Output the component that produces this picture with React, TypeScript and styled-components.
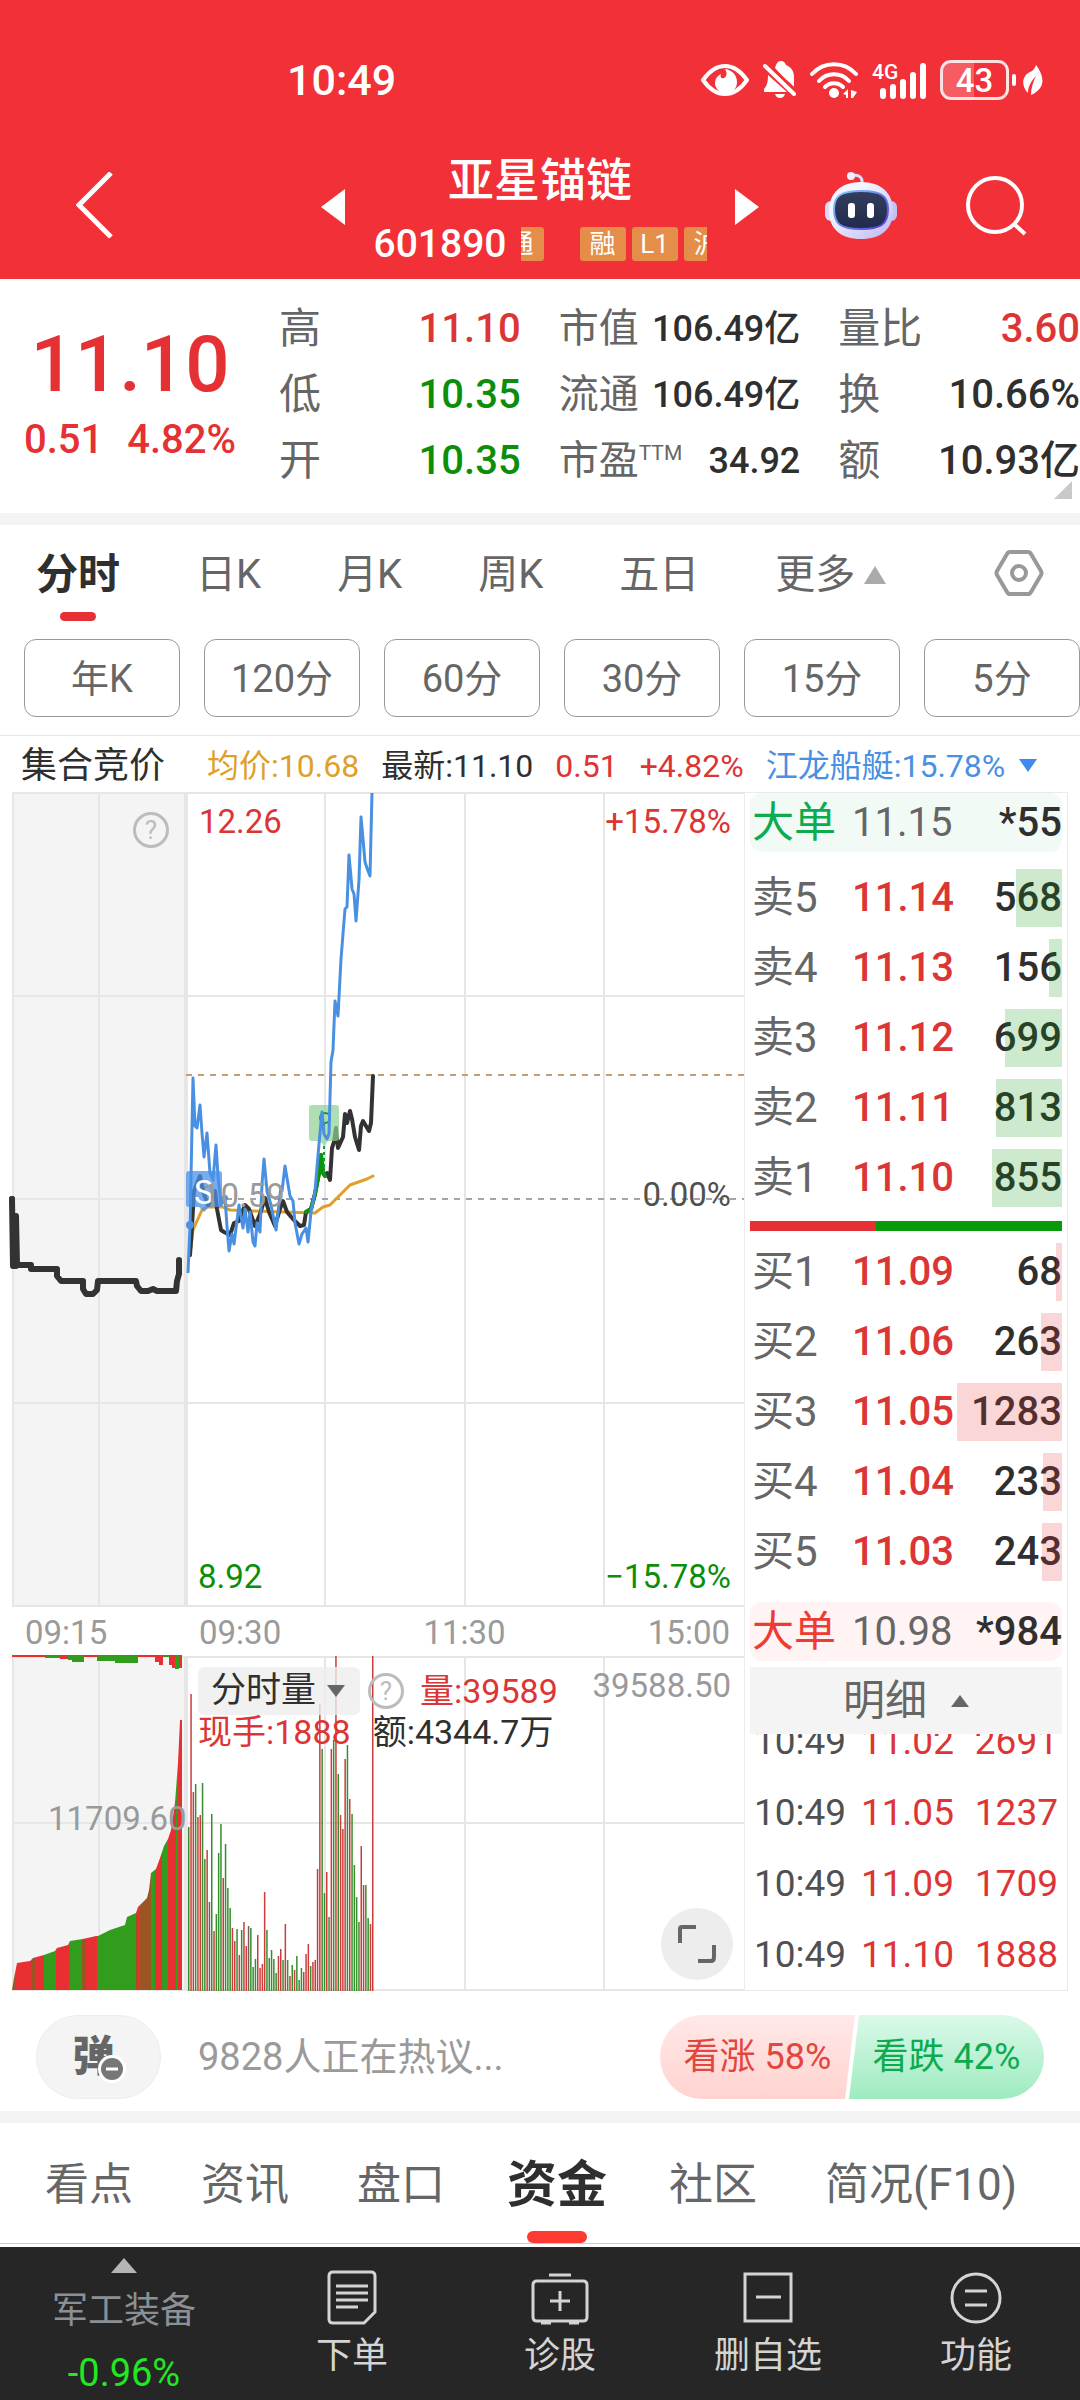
import React from "react";
import styled, { createGlobalStyle } from "styled-components";

const FONT = `Roboto, "Noto Sans CJK SC", sans-serif`;
const RED = "#dc3535";
const GREEN = "#0b8f0b";
const INK = "#2f2f2f";
const MUTED = "#666666";
const FAINT = "#9a9a9a";
const BLUE = "#4a90e2";

const GlobalStyle = createGlobalStyle`
  *, *::before, *::after { box-sizing: border-box; }
  body {
    margin: 0;
    background: #ffffff;
    color: ${INK};
    font-family: ${FONT};
    overflow-x: hidden;
  }
  button, select {
    margin: 0;
    padding: 0;
    border: 0;
    background: none;
    color: inherit;
    font: inherit;
    cursor: pointer;
  }
  h1, p, dl, dt, dd { margin: 0; font-weight: inherit; }
  a { color: inherit; text-decoration: none; }
  svg { display: block; flex: none; }
`;

/* ---------- Header ---------- */

const Header = styled.header`
  background: #f23037;
  color: #ffffff;
  height: 279px;
`;

const StatusBar = styled.div`
  display: flex;
  align-items: center;
  justify-content: space-between;
  height: 124px;
  padding: 36px 37px 0 287px;
`;

const Clock = styled.time`
  font-size: 43px;
  line-height: 50px;
  font-weight: 500;
`;

const StatusIcons = styled.div`
  display: flex;
  align-items: center;
  gap: 14px;
`;

const TitleBar = styled.div`
  display: grid;
  grid-template-columns: 1fr 438px 1fr;
  height: 155px;
`;

const HeaderSide = styled.div<{ $end?: boolean }>`
  display: flex;
  align-items: center;
  justify-content: ${(p) => (p.$end ? "flex-end" : "flex-start")};
  gap: 68px;
  padding: ${(p) => (p.$end ? "8px 53px 0 0" : "6px 0 0 76px")};
`;

const TitleCenter = styled.div`
  display: flex;
  align-items: center;
  justify-content: space-between;
  padding-top: 10px;
`;

const TitleStack = styled.div`
  display: flex;
  flex-direction: column;
  align-items: center;
  gap: 9px;
  padding-top: 10px;
`;

const StockName = styled.h1`
  font-size: 46px;
  line-height: 56px;
  font-weight: 500;
`;

const CodeLine = styled.div`
  display: flex;
  align-items: center;
  gap: 14px;
  font-size: 39px;
  line-height: 54px;
  font-weight: 500;
`;

const TagStrip = styled.div`
  display: flex;
  justify-content: center;
  gap: 6px;
  width: 186px;
  overflow: hidden;
`;

const Tag = styled.span<{ $spaced?: boolean }>`
  flex: none;
  width: 46px;
  margin-right: ${(p) => (p.$spaced ? "30px" : "0")};
  border-radius: 3px;
  background: #e48e49;
  font-size: 26px;
  line-height: 34px;
  font-weight: 400;
  text-align: center;
`;

/* ---------- Quote ---------- */

const Quote = styled.section`
  position: relative;
  display: grid;
  grid-template-columns: 260px 1fr;
  gap: 19px;
  height: 246px;
  border-bottom: 12px solid #f4f4f4;
`;

const PriceBlock = styled.div`
  display: flex;
  flex-direction: column;
  align-items: center;
  padding-top: 44px;
  color: #e53133;
  font-weight: 500;
`;

const BigPrice = styled.p`
  font-size: 78px;
  line-height: 84px;
`;

const Change = styled.p`
  display: flex;
  gap: 24px;
  margin-top: 10px;
  font-size: 40px;
  line-height: 46px;
`;

const Stats = styled.div`
  display: grid;
  grid-template-columns: repeat(3, 1fr);
  gap: 38px;
  padding-top: 17px;
`;

const StatColumn = styled.dl<{ $compact?: boolean }>`
  font-size: ${(p) => (p.$compact ? "36px" : "40px")};
  line-height: 66px;

  dt { font-size: ${(p) => (p.$compact ? "40px" : "42px")}; }
`;

const Stat = styled.div`
  display: flex;
  justify-content: space-between;
  height: 66px;
  white-space: nowrap;

  dt { color: ${MUTED}; }
`;

const Sup = styled.sup`
  font-size: 21px;
  line-height: 20px;
  vertical-align: 14px;
`;

const StatValue = styled.dd<{ $color?: string }>`
  color: ${(p) => p.$color || INK};
  font-weight: 500;
`;

const Corner = styled.span`
  position: absolute;
  right: 8px;
  bottom: 14px;
  border-left: 18px solid transparent;
  border-bottom: 18px solid #c9c9c9;
`;

/* ---------- Period tabs ---------- */

const PeriodTabs = styled.nav`
  display: flex;
  align-items: center;
  gap: 76px;
  height: 96px;
  padding: 0 36px;
`;

const PeriodTab = styled.button<{ $active?: boolean }>`
  position: relative;
  display: flex;
  align-items: center;
  gap: 9px;
  height: 96px;
  padding-top: 3px;
  font-size: ${(p) => (p.$active ? "42px" : "40px")};
  line-height: 48px;
  color: ${(p) => (p.$active ? INK : MUTED)};
  font-weight: ${(p) => (p.$active ? 700 : 400)};
  white-space: nowrap;

  &::after {
    content: "";
    position: absolute;
    left: 50%;
    bottom: 0;
    width: 36px;
    height: 9px;
    margin-left: -18px;
    border-radius: 5px;
    background: ${(p) => (p.$active ? "#e53133" : "transparent")};
  }
`;

const SettingsButton = styled.button`
  margin-left: auto;
`;

const MinuteRow = styled.div`
  display: flex;
  gap: 24px;
  height: 115px;
  padding: 18px 0 18px 24px;
  border-bottom: 1px solid #e6e6e6;
  overflow: hidden;
`;

const MinuteButton = styled.button`
  flex: 1 0 156px;
  height: 78px;
  padding-top: 2px;
  border: 1px solid #999999;
  border-radius: 12px;
  color: ${MUTED};
  font-size: 38px;
  line-height: 46px;
`;

const InfoRow = styled.div`
  display: flex;
  align-items: center;
  gap: 22px;
  height: 56px;
  padding: 3px 0 0 21px;
  font-size: 32px;
  line-height: 40px;
  white-space: nowrap;
`;

const Auction = styled.button`
  margin-right: 20px;
  font-size: 36px;
`;

const InfoText = styled.span<{ $color?: string }>`
  color: ${(p) => p.$color || INK};
`;

const PeerButton = styled.button`
  display: flex;
  align-items: center;
  gap: 14px;
  color: ${BLUE};
`;

/* ---------- Charts ---------- */

const ChartArea = styled.section`
  display: grid;
  grid-template-columns: minmax(0, 732fr) minmax(0, 324fr);
  padding: 0 12px;
`;

const ChartColumn = styled.div`
  display: flex;
  flex-direction: column;
`;

const Plot = styled.div<{ $h: number }>`
  position: relative;
  height: ${(p) => p.$h}px;

  > svg { width: 100%; height: 100%; overflow: visible; }
`;

const PlotLabel = styled.span<{
  $top: number;
  $left?: number;
  $right?: number;
  $color?: string;
}>`
  position: absolute;
  top: ${(p) => p.$top}px;
  left: ${(p) => (p.$left === undefined ? "auto" : `${p.$left}px`)};
  right: ${(p) => (p.$right === undefined ? "auto" : `${p.$right}px`)};
  color: ${(p) => p.$color || FAINT};
  font-size: 33px;
  line-height: 38px;
  white-space: nowrap;
`;

const HelpButton = styled.button<{ $floating?: boolean }>`
  position: ${(p) => (p.$floating ? "absolute" : "static")};
  top: 20px;
  left: 121px;
  width: 36px;
  height: 36px;
  border: 3px solid #bcbcbc;
  border-radius: 50%;
  color: #bcbcbc;
  font-size: 26px;
  line-height: 30px;
`;

const TimeAxis = styled.div`
  display: grid;
  grid-template-columns: 174px 1fr 1fr 1fr;
  height: 49px;
  padding: 0 14px 0 13px;
  color: ${FAINT};
  font-size: 33px;
  line-height: 51px;

  span:nth-child(3) { text-align: center; }
  span:last-child { text-align: right; }
`;

const VolumeHead = styled.div`
  position: absolute;
  top: 11px;
  left: 186px;
  font-size: 34px;
  line-height: 34px;
  white-space: nowrap;
`;

const VolumeLine = styled.div<{ $gap: number }>`
  display: flex;
  align-items: center;
  gap: ${(p) => p.$gap}px;
`;

const SelectBox = styled.label`
  display: flex;
  align-items: center;
  gap: 10px;
  width: 162px;
  height: 48px;
  padding-left: 13px;
  border-radius: 6px;
  background: rgba(238, 238, 238, 0.8);

  select {
    appearance: none;
    width: 106px;
    color: ${INK};
    font-size: 35px;
    line-height: 42px;
  }
`;

const VolumeValue = styled.span`
  margin-left: 8px;
  color: ${RED};
`;

const ExpandButton = styled.button`
  position: absolute;
  right: 11px;
  bottom: 11px;
  display: grid;
  place-items: center;
  width: 72px;
  height: 72px;
  border-radius: 50%;
  background: #ededed;
`;

/* ---------- Order book ---------- */

const Book = styled.div`
  display: flex;
  flex-direction: column;
  padding: 0 5px;
  border: 1px solid #ebebeb;
`;

const BigOrder = styled.div<{ $side: "buy" | "sell" }>`
  display: grid;
  grid-template-columns: 100px 1fr auto;
  align-items: center;
  height: 59px;
  padding-left: 2px;
  border-radius: 12px;
  background: ${(p) => (p.$side === "buy" ? "#fff3f3" : "#f2faf6")};
  color: ${MUTED};
  font-size: 40px;
  line-height: 50px;

  strong {
    color: ${(p) => (p.$side === "buy" ? "#ee3b34" : "#0cab4f")};
    font-size: 42px;
    font-weight: 400;
  }
  em { color: ${INK}; font-style: normal; font-weight: 500; }
`;

const BookTable = styled.table<{ $side: "buy" | "sell" }>`
  display: block;
  margin: ${(p) => (p.$side === "sell" ? "11px 0 8px" : "6px 0 15px")};

  tbody { display: block; }
`;

const BookRow = styled.tr`
  position: relative;
  display: grid;
  grid-template-columns: 100px 1fr auto;
  align-items: center;
  height: 70px;
  padding-left: 2px;
  font-size: 40px;
  line-height: 58px;
  font-weight: 500;

  th, td { padding: 0; }
  th { color: ${MUTED}; font-size: 42px; font-weight: 400; text-align: left; }
`;

const BookPrice = styled.td`
  color: ${RED};
`;

const BookVolume = styled.td`
  color: ${INK};
`;

const DepthBar = styled.span<{ $side: "buy" | "sell" }>`
  position: absolute;
  top: 6px;
  right: 0;
  height: 58px;
  background: ${(p) =>
    p.$side === "buy" ? "rgba(229, 49, 51, 0.2)" : "rgba(9, 150, 9, 0.2)"};
`;

const Ratio = styled.div`
  display: grid;
  grid-template-columns: 126fr 186fr;
  height: 10px;

  i:first-child { background: #e53133; }
  i:last-child { background: #089a08; }
`;

const DetailToggle = styled.button`
  display: flex;
  align-items: center;
  justify-content: center;
  gap: 24px;
  height: 67px;
  margin-top: 6px;
  background: #f4f4f4;
  color: ${MUTED};
  font-size: 42px;
  line-height: 50px;
`;

const Ticks = styled.table`
  display: flex;
  flex-direction: column;
  justify-content: flex-end;
  height: 256px;
  overflow: hidden;

  tbody { display: block; }
  tr {
    display: grid;
    grid-template-columns: 107px 1fr auto;
    padding: 0 4px 0 4px;
    color: ${RED};
    font-size: 37px;
    line-height: 71px;
  }
  td { padding: 0; }
  td:first-child { color: #505050; }
`;

/* ---------- Discussion ---------- */

const Discussion = styled.section`
  display: flex;
  align-items: center;
  gap: 37px;
  height: 132px;
  padding: 12px 36px 0;
  border-bottom: 12px solid #f4f4f4;
`;

const Danmu = styled.button`
  position: relative;
  width: 125px;
  height: 84px;
  padding-right: 10px;
  border: 1px solid #ededed;
  border-radius: 42px;
  background: #f4f4f4;
  color: ${MUTED};
  font-size: 42px;
  line-height: 80px;
  font-weight: 900;

  svg { position: absolute; left: 61px; top: 39px; }
`;

const TalkLink = styled.a`
  flex: 1;
  color: ${FAINT};
  font-size: 38px;
  line-height: 48px;
`;

const Votes = styled.div`
  display: flex;
  height: 84px;
  border-radius: 42px;
  overflow: hidden;
`;

const Vote = styled.button<{ $down?: boolean }>`
  width: 195px;
  margin-left: ${(p) => (p.$down ? "-6px" : "0")};
  background: ${(p) =>
    p.$down
      ? "linear-gradient(#dbf9e9, #9eebbf)"
      : "linear-gradient(#ffe9e8, #ffd3cf)"};
  clip-path: ${(p) =>
    p.$down
      ? "polygon(10px 0, 100% 0, 100% 100%, 0 100%)"
      : "polygon(0 0, 100% 0, calc(100% - 10px) 100%, 0 100%)"};
  color: ${(p) => (p.$down ? "#0cab4f" : "#e2463f")};
  font-size: 36px;
  line-height: 44px;
`;

/* ---------- Bottom ---------- */

const SectionTabs = styled.nav`
  display: flex;
  align-items: center;
  gap: 68px;
  height: 121px;
  margin-bottom: 3px;
  padding-left: 45px;
  border-bottom: 1px solid #cccccc;
`;

const SectionTab = styled.button<{ $active?: boolean }>`
  position: relative;
  height: 120px;
  margin: ${(p) => (p.$active ? "0 -6px" : "0")};
  padding-top: 3px;
  color: ${(p) => (p.$active ? INK : MUTED)};
  font-size: ${(p) => (p.$active ? "50px" : "44px")};
  line-height: 60px;
  font-weight: ${(p) => (p.$active ? 700 : 400)};
  white-space: nowrap;

  &::after {
    content: "";
    position: absolute;
    left: 50%;
    bottom: 0;
    width: 60px;
    height: 12px;
    margin-left: -30px;
    border-radius: 6px;
    background: ${(p) => (p.$active ? "#fd3a30" : "transparent")};
  }
`;

const BottomBar = styled.nav`
  display: grid;
  grid-template-columns: 248fr repeat(4, 208fr);
  height: 153px;
  background: #262626;
  color: #d4d4d4;
`;

const BottomItem = styled.button`
  display: flex;
  flex-direction: column;
  align-items: center;
  justify-content: flex-end;
  gap: 8px;
  padding-bottom: 22px;
  font-size: 36px;
  line-height: 44px;
`;

const SectorItem = styled.button`
  display: flex;
  flex-direction: column;
  align-items: center;
  justify-content: flex-start;
  padding-top: 11px;
  color: #8b9096;
  font-size: 36px;
  line-height: 42px;

  svg { margin-bottom: 17px; }
  strong {
    margin-top: 20px;
    color: #22e822;
    font-size: 38px;
    font-weight: 400;
  }
`;

/* ---------- Icons ---------- */

const Triangle = ({ w, h, dir, color }: { w: number; h: number; dir: "up" | "down" | "left" | "right"; color: string }) => {
  const points = {
    up: `0,${h} ${w},${h} ${w / 2},0`,
    down: `0,0 ${w},0 ${w / 2},${h}`,
    left: `${w},0 ${w},${h} 0,${h / 2}`,
    right: `0,0 ${w},${h / 2} 0,${h}`,
  }[dir];
  return (
    <svg width={w} height={h} viewBox={`0 0 ${w} ${h}`} aria-hidden="true">
      <polygon points={points} fill={color} />
    </svg>
  );
};

const EyeIcon = () => (
  <svg width="48" height="34" viewBox="0 0 48 34" fill="none" aria-hidden="true">
    <path d="M2 17C9 7 16 3 24 3s15 4 22 14c-7 10-14 14-22 14S9 27 2 17z" stroke="#fff" strokeWidth="4" strokeLinejoin="round" />
    <path d="M24 6c3 5 1 8-1 9-3 1-4-1-3-4-4 2-6 5-6 9 0 6 5 10 11 10s11-4 11-11c0-7-5-12-12-13z" fill="#fff" />
  </svg>
);

const BellOffIcon = () => (
  <svg width="33" height="38" viewBox="0 0 33 38" aria-hidden="true">
    <path d="M13 4c1-2 2-4 5-4s4 2 5 4c5 2 8 6 8 12v12L12 7z" fill="#fff" />
    <path d="M5 14l19 17H1v-3c3-3 4-7 4-14z" fill="#fff" />
    <path d="M2 5l29 28" stroke="#fff" strokeWidth="4" strokeLinecap="round" />
    <path d="M12 33h10c-1 3-3 4-5 4s-4-1-5-4z" fill="#fff" />
    <path d="M7 5l25 23" stroke="#f23037" strokeWidth="2" />
  </svg>
);

const WifiIcon = () => (
  <svg width="48" height="38" viewBox="0 0 48 38" fill="none" aria-hidden="true">
    <g stroke="#fff" strokeWidth="4" strokeLinecap="round">
      <path d="M2 13c12-13 32-13 44 0" />
      <path d="M9 20c8-9 22-9 30 0" />
      <path d="M15 26c5-5 13-5 18 0" />
    </g>
    <circle cx="24" cy="32" r="5" fill="#fff" />
    <path d="M38 29v8h-2v-3l-3-1 5-5zM41 37v-8l6 2-4 6z" fill="#fff" />
  </svg>
);

const Signal = styled.div`
  position: relative;
  width: 54px;
  height: 37px;

  span {
    position: absolute;
    top: -1px;
    left: 0;
    font-size: 21px;
    line-height: 22px;
    font-weight: 500;
  }
`;

const SignalIcon = () => (
  <Signal>
    <svg width="54" height="37" viewBox="0 0 54 37" aria-hidden="true">
      <g stroke="#fff" strokeWidth="6" strokeLinecap="round">
        <path d="M11 29v5" />
        <path d="M21 25v9" />
        <path d="M31 20v14" />
        <path d="M41 13v21" />
        <path d="M51 4v30" />
      </g>
    </svg>
    <span>4G</span>
  </Signal>
);

const Battery = styled.div`
  display: flex;
  align-items: center;
  gap: 3px;

  span {
    width: 69px;
    height: 40px;
    border: 3px solid rgba(255, 255, 255, 0.85);
    border-radius: 11px;
    background: linear-gradient(90deg, rgba(255, 255, 255, 0.22) 50%, transparent 50%);
    font-size: 33px;
    line-height: 35px;
    font-weight: 500;
    text-align: center;
  }
  i { width: 4px; height: 12px; border-radius: 2px; background: #ffffff; }
  svg { margin-left: 4px; }
`;

const LeafIcon = () => (
  <svg width="20" height="31" viewBox="0 0 20 31" aria-hidden="true">
    <path d="M13 0c7 9 10 20 0 27-2 2-4 2-5 3 0-7 2-13 5-19-5 5-8 11-8 17C-3 20 0 10 7 7c3-1 5-4 6-7z" fill="#fff" />
  </svg>
);

const BackIcon = () => (
  <svg width="37" height="66" viewBox="0 0 37 66" fill="none" aria-hidden="true">
    <path d="M35 1L3 33l32 32" stroke="#fff" strokeWidth="5" />
  </svg>
);

const RobotIcon = () => (
  <svg width="72" height="68" viewBox="0 0 72 68" fill="none" aria-hidden="true">
    <defs>
      <linearGradient id="shell" x1="0" y1="0" x2="1" y2="1">
        <stop offset="0.3" stopColor="#f4f5ff" />
        <stop offset="1" stopColor="#b9b8f2" />
      </linearGradient>
      <linearGradient id="visor" x1="0" y1="0" x2="0" y2="1">
        <stop offset="0" stopColor="#343f5e" />
        <stop offset="1" stopColor="#1f2a4c" />
      </linearGradient>
      <linearGradient id="rim" x1="0" y1="0" x2="1" y2="1">
        <stop offset="0" stopColor="#7fd3ff" />
        <stop offset="1" stopColor="#5b31d8" />
      </linearGradient>
    </defs>
    <path d="M26 4c6-2 12 0 11 8" stroke="#dfe0fa" strokeWidth="3" />
    <circle cx="26" cy="4" r="4" fill="#eeeefc" />
    <rect x="0" y="29" width="12" height="20" rx="6" fill="#dadaf8" />
    <rect x="60" y="29" width="12" height="20" rx="6" fill="#c3c2f4" />
    <path d="M36 10c20 0 32 11 32 29S56 67 36 67 4 57 4 39s12-29 32-29z" fill="url(#shell)" />
    <path d="M36 19c19 0 27 4 27 18 0 16-8 20-27 20S9 53 9 37c0-14 8-18 27-18z" fill="url(#visor)" stroke="url(#rim)" strokeWidth="2" />
    <rect x="23" y="31" width="7" height="15" rx="3" fill="#fff" />
    <rect x="42" y="31" width="7" height="15" rx="3" fill="#fff" />
  </svg>
);

const SearchIcon = () => (
  <svg width="62" height="62" viewBox="0 0 62 62" fill="none" aria-hidden="true">
    <circle cx="30" cy="30" r="27" stroke="#fff" strokeWidth="4" />
    <path d="M49 49l11 10" stroke="#fff" strokeWidth="4" />
  </svg>
);

const HexIcon = () => (
  <svg width="50" height="46" viewBox="0 0 50 46" fill="none" stroke="#999" strokeWidth="4" strokeLinejoin="round" aria-hidden="true">
    <path d="M16 2h18q2 0 3 2l10 17q1 2 0 4L37 42q-1 2-3 2H16q-2 0-3-2L3 25q-1-2 0-4L13 4q1-2 3-2z" />
    <circle cx="25" cy="23" r="7" />
  </svg>
);

const ExpandIcon = () => (
  <svg width="38" height="38" viewBox="0 0 38 38" fill="none" stroke="#666" strokeWidth="4" aria-hidden="true">
    <path d="M2 18V4q0-2 2-2h14M36 20v12q0 4-3 4H20" />
  </svg>
);

const MinusBadge = () => (
  <svg width="28" height="28" viewBox="0 0 28 28" aria-hidden="true">
    <circle cx="14" cy="14" r="14" fill="#fff" />
    <circle cx="14" cy="14" r="11" fill="#777" />
    <path d="M8 14h12" stroke="#fff" strokeWidth="3" />
  </svg>
);

const BottomIcon = ({ children }: { children: React.ReactNode }) => (
  <svg width="58" height="56" viewBox="0 0 58 56" fill="none" stroke="#d4d4d4" strokeWidth="3" aria-hidden="true">
    {children}
  </svg>
);

/* ---------- Data ---------- */

type Level = [string, string, number];

const SELLS: Level[] = [
  ["卖5", "11.14", 568],
  ["卖4", "11.13", 156],
  ["卖3", "11.12", 699],
  ["卖2", "11.11", 813],
  ["卖1", "11.10", 855],
];
const BUYS: Level[] = [
  ["买1", "11.09", 68],
  ["买2", "11.06", 263],
  ["买3", "11.05", 1283],
  ["买4", "11.04", 233],
  ["买5", "11.03", 243],
];
const TICKS = [
  ["10:49", "11.02", "2691"],
  ["10:49", "11.05", "1237"],
  ["10:49", "11.09", "1709"],
  ["10:49", "11.10", "1888"],
];

const AUCTION_LINE =
  "12,1199 13,1266 16,1266 16,1216 17,1265 31,1265 31,1269 57,1269 57,1276 61,1281 83,1281 83,1289 86,1294 93,1294 97,1290 98,1281 136,1281 137,1286 141,1291 148,1291 153,1289 157,1291 176,1291 177,1281 179,1274 179,1260";
const PEER_LINE =
  "188,1273 190,1226 193,1078 195,1126 197,1128 200,1105 202,1133 204,1157 207,1133 210,1173 213,1180 216,1145 218,1176 221,1205 225,1198 227,1226 229,1251 232,1234 234,1244 239,1205 243,1228 245,1209 248,1232 250,1212 253,1242 255,1246 257,1223 260,1232 262,1184 264,1159 267,1191 271,1205 276,1230 281,1187 282,1191 285,1166 290,1196 293,1201 295,1223 299,1244 302,1234 306,1228 308,1242 311,1212 315,1191 319,1144 322,1112 324,1134 327,1139 329,1134 331,1062 333,1050 335,1001 338,1016 341,959 345,909 347,907 349,855 352,889 354,894 356,921 359,880 361,817 363,839 365,862 368,871 370,876 372,793";
const PRICE_LINE =
  "190,1255 192,1226 194,1191 200,1176 203,1191 208,1205 215,1191 217,1209 221,1230 224,1232 230,1235 234,1223 239,1221 245,1205 249,1209 255,1226 260,1214 265,1198 269,1212 275,1226 280,1209 283,1201 287,1212 293,1219 300,1226 304,1225 306,1212 311,1209 315,1194 319,1173 321,1155 323,1173 325,1176 327,1173 330,1180 332,1148 334,1142 336,1128 338,1148 343,1137 345,1114 347,1123 350,1111 352,1119 355,1137 359,1150 361,1126 363,1121 366,1126 369,1131 371,1123 373,1076";
const SURGE_LINE = "306,1212 311,1209 315,1194 319,1173 321,1155 323,1173 325,1176";
const AVERAGE_LINE =
  "191,1248 193,1230 197,1221 202,1210 207,1207 223,1207 230,1210 253,1211 315,1213 323,1207 330,1205 337,1198 350,1185 367,1179 373,1176";

/* One entry per minute: bar height, then r (up), g (down) or k (flat). */
const MINUTES =
  "164g 297r 199r 207g 174r 176r 208g 132g 141r 89k 177g 60r 77g 138g 167g 113r 147g 103g 83g 63r 50r 62g 36r 61g 69r 45r 65k 63g 24g 32g 56r 23r 27r 99r 61g 33g 41g 32g 18g 35r 42r 31g 67r 31g 15r 26g 21r 35g 11g 23g 19r 37r 47r 25g 29r 31r 122r 287r 242g 98g 119r 74g 242r 251g 335r 217g 176r 162r 232r 246g 192r 177g 126g 94g 69g 145r 106r 106g 73g 67r 335r"
    .split(" ")
    .map((m) => ({ h: parseInt(m, 10), kind: m.slice(-1) }));

const BAR_COLORS: Record<string, string> = { r: "#cc3c3c", g: "#358f2c", k: "#7b5a5a" };

const AUCTION_AREA =
  "12,1990 14,1978 17,1963 30,1961 33,1958 44,1955 55,1951 57,1948 68,1945 70,1941 83,1939 96,1936 98,1936 110,1930 125,1925 127,1917 136,1913 138,1907 147,1898 149,1890 151,1873 156,1869 160,1858 164,1846 168,1839 171,1830 175,1803 178,1763 180,1720 182,1720 182,1990";

/* Start and end of each run in the auction area, with its colour. */
const AUCTION_RUNS: [number, number, string][] = [
  [12, 15, "k"], [15, 32, "r"], [32, 35, "k"], [35, 44, "r"], [44, 56, "g"],
  [56, 69, "r"], [69, 82, "g"], [82, 86, "k"], [86, 97, "r"], [97, 136, "g"],
  [136, 138, "k"], [138, 140, "r"], [140, 151, "k"], [151, 155, "g"], [155, 162, "r"],
  [162, 168, "g"], [168, 176, "r"], [176, 178, "g"], [178, 182, "r"],
];
const RUN_COLORS: Record<string, string> = { r: "#e83033", g: "#329c1c", k: "#9b5522" };

/* Unmatched volume hanging from the top edge: x, width, depth, colour. */
const UNMATCHED: [number, number, number, string][] = [
  [12, 33, 2, "r"], [45, 15, 3, "g"], [60, 8, 4, "r"], [68, 4, 5, "g"], [72, 12, 7, "g"],
  [84, 13, 2, "r"], [97, 18, 6, "g"], [115, 23, 8, "g"], [138, 17, 2, "r"], [155, 4, 7, "r"],
  [159, 4, 10, "r"], [163, 6, 2, "g"], [169, 3, 10, "r"], [172, 3, 13, "r"], [175, 4, 14, "g"], [179, 3, 13, "r"],
];

/* ---------- Sections ---------- */

const PriceChart = () => (
  <Plot $h={815}>
    <svg viewBox="12 792 732 815" preserveAspectRatio="none" role="img" aria-label="分时走势">
      <rect x="12" y="793" width="174" height="813" fill="#f4f4f4" />
      <g stroke="#e6e6e6" strokeWidth="2">
        <path d="M12 793H744M12 996H744M12 1606H744M12 1403H744M12 1199H186" />
        <path d="M13 793V1606M99 793V1606M325 793V1606M465 793V1606M604 793V1606" />
        <path d="M186 793V1606" strokeWidth="4" />
      </g>
      <path d="M186 1075H744" stroke="#c39f72" strokeWidth="2" strokeDasharray="6 6" />
      <path d="M226 1199H744" stroke="#a5a5a5" strokeWidth="2" strokeDasharray="6 6" />
      <g fill="none" strokeLinejoin="round" strokeLinecap="round">
        <polyline points={AUCTION_LINE} stroke="#333" strokeWidth="6" />
        <polyline points={AVERAGE_LINE} stroke="#dfa02b" strokeWidth="3" />
        <polyline points={PRICE_LINE} stroke="#333" strokeWidth="4" />
        <polyline points={SURGE_LINE} stroke="#0b950b" strokeWidth="4" />
      </g>
      <circle cx="12" cy="1199" r="3" fill="#333" />
      <path d="M312 1105h24q3 0 3 3v30q0 3-3 3h-8l-4 5-4-5h-8q-3 0-3-3v-30q0-3 3-3z" fill="#8fd093" fillOpacity="0.7" />
      <circle cx="325" cy="1118" r="5" fill="none" stroke="#149a3c" strokeWidth="2" />
      <path d="M324 1123v8M324 1146v28" stroke="#149a3c" strokeWidth="2" strokeDasharray="3 3" />
      <polyline points={PEER_LINE} fill="none" stroke={BLUE} strokeWidth="3" strokeLinejoin="round" />
      <path d="M189 1171h30q3 0 3 3v30q0 3-3 3h-10l-5 5-5-5h-10q-3 0-3-3v-30q0-3 3-3z" fill="#4a90e8" fillOpacity="0.75" />
      <circle cx="190" cy="1225" r="4" fill={BLUE} />
      <circle cx="225" cy="1198" r="3" fill={BLUE} />
    </svg>
    <HelpButton $floating aria-label="集合竞价说明">?</HelpButton>
    <PlotLabel $top={11} $left={187} $color={RED}>12.26</PlotLabel>
    <PlotLabel $top={11} $right={13} $color={RED}>+15.78%</PlotLabel>
    <PlotLabel $top={382} $left={182} $color="#ffffff">S</PlotLabel>
    <PlotLabel $top={385} $left={190}>10.59</PlotLabel>
    <PlotLabel $top={384} $right={13} $color="#505050">0.00%</PlotLabel>
    <PlotLabel $top={766} $left={186} $color={GREEN}>8.92</PlotLabel>
    <PlotLabel $top={766} $right={13} $color={GREEN}>−15.78%</PlotLabel>
  </Plot>
);

const VolumeChart = () => (
  <Plot $h={335}>
    <svg viewBox="12 1656 732 335" preserveAspectRatio="none" role="img" aria-label="分时量">
      <defs>
        <clipPath id="auction">
          <polygon points={AUCTION_AREA} />
        </clipPath>
      </defs>
      <rect x="12" y="1656" width="174" height="334" fill="#f4f4f4" />
      <g stroke="#e6e6e6" strokeWidth="2">
        <path d="M12 1657H744M12 1823H744M12 1990H744" />
        <path d="M13 1656V1990M99 1656V1990M325 1656V1990M465 1656V1990M604 1656V1990" />
        <path d="M186 1656V1990" strokeWidth="4" />
      </g>
      <g clipPath="url(#auction)">
        {AUCTION_RUNS.map(([from, to, kind]) => (
          <rect key={from} x={from} y="1700" width={to - from} height="290" fill={RUN_COLORS[kind]} />
        ))}
      </g>
      {UNMATCHED.map(([x, w, h, kind]) => (
        <rect key={x} x={x} y="1655" width={w} height={h} fill={RUN_COLORS[kind]} />
      ))}
      {MINUTES.map(({ h, kind }, i) => (
        <rect key={i} x={188 + (i * 184) / 80} y={1991 - h} width="1.5" height={h} fill={BAR_COLORS[kind]} />
      ))}
    </svg>
    <PlotLabel $top={144} $left={36}>11709.60</PlotLabel>
    <PlotLabel $top={11} $right={13}>39588.50</PlotLabel>
    <VolumeHead>
      <VolumeLine $gap={8}>
        <SelectBox>
          <select aria-label="指标" defaultValue="volume">
            <option value="volume">分时量</option>
          </select>
          <Triangle w={18} h={12} dir="down" color="#666" />
        </SelectBox>
        <HelpButton aria-label="分时量说明">?</HelpButton>
        <VolumeValue>量:39589</VolumeValue>
      </VolumeLine>
      <VolumeLine $gap={22}>
        <InfoText $color={RED}>现手:1888</InfoText>
        <InfoText>额:4344.7万</InfoText>
      </VolumeLine>
    </VolumeHead>
    <ExpandButton aria-label="全屏"><ExpandIcon /></ExpandButton>
  </Plot>
);

const Levels = ({ side, rows }: { side: "buy" | "sell"; rows: Level[] }) => (
  <BookTable $side={side}>
    <tbody>
      {rows.map(([name, price, volume]) => (
        <BookRow key={name}>
          <th scope="row">{name}</th>
          <BookPrice>{price}</BookPrice>
          <BookVolume>
            {volume}
            <DepthBar $side={side} style={{ width: `${(volume / 1283) * 33.6}%` }} />
          </BookVolume>
        </BookRow>
      ))}
    </tbody>
  </BookTable>
);

export default function App() {
  return (
    <>
      <GlobalStyle />
      <Header>
        <StatusBar>
          <Clock>10:49</Clock>
          <StatusIcons>
            <EyeIcon />
            <BellOffIcon />
            <WifiIcon />
            <SignalIcon />
            <Battery>
              <span>43</span>
              <i />
              <LeafIcon />
            </Battery>
          </StatusIcons>
        </StatusBar>
        <TitleBar>
          <HeaderSide>
            <button aria-label="返回"><BackIcon /></button>
          </HeaderSide>
          <TitleCenter>
            <button aria-label="上一只"><Triangle w={24} h={36} dir="left" color="#fff" /></button>
            <TitleStack>
              <StockName>亚星锚链</StockName>
              <CodeLine>
                601890
                <TagStrip>
                  <Tag $spaced>通</Tag>
                  <Tag>融</Tag>
                  <Tag>L1</Tag>
                  <Tag>沪</Tag>
                </TagStrip>
              </CodeLine>
            </TitleStack>
            <button aria-label="下一只"><Triangle w={24} h={36} dir="right" color="#fff" /></button>
          </TitleCenter>
          <HeaderSide $end>
            <button aria-label="智能助手"><RobotIcon /></button>
            <button aria-label="搜索"><SearchIcon /></button>
          </HeaderSide>
        </TitleBar>
      </Header>

      <main>
        <Quote>
          <PriceBlock>
            <BigPrice>11.10</BigPrice>
            <Change><span>0.51</span><span>4.82%</span></Change>
          </PriceBlock>
          <Stats>
            <StatColumn>
              <Stat><dt>高</dt><StatValue $color={RED}>11.10</StatValue></Stat>
              <Stat><dt>低</dt><StatValue $color={GREEN}>10.35</StatValue></Stat>
              <Stat><dt>开</dt><StatValue $color={GREEN}>10.35</StatValue></Stat>
            </StatColumn>
            <StatColumn $compact>
              <Stat><dt>市值</dt><StatValue>106.49亿</StatValue></Stat>
              <Stat><dt>流通</dt><StatValue>106.49亿</StatValue></Stat>
              <Stat><dt>市盈<Sup>TTM</Sup></dt><StatValue>34.92</StatValue></Stat>
            </StatColumn>
            <StatColumn>
              <Stat><dt>量比</dt><StatValue $color={RED}>3.60</StatValue></Stat>
              <Stat><dt>换</dt><StatValue>10.66%</StatValue></Stat>
              <Stat><dt>额</dt><StatValue>10.93亿</StatValue></Stat>
            </StatColumn>
          </Stats>
          <Corner />
        </Quote>

        <PeriodTabs>
          <PeriodTab $active>分时</PeriodTab>
          <PeriodTab>日K</PeriodTab>
          <PeriodTab>月K</PeriodTab>
          <PeriodTab>周K</PeriodTab>
          <PeriodTab>五日</PeriodTab>
          <PeriodTab>更多<Triangle w={22} h={18} dir="up" color="#aaa" /></PeriodTab>
          <SettingsButton aria-label="设置"><HexIcon /></SettingsButton>
        </PeriodTabs>

        <MinuteRow>
          {["年K", "120分", "60分", "30分", "15分", "5分"].map((label) => (
            <MinuteButton key={label}>{label}</MinuteButton>
          ))}
        </MinuteRow>

        <InfoRow>
          <Auction>集合竞价</Auction>
          <InfoText $color="#dfa02b">均价:10.68</InfoText>
          <InfoText>最新:11.10</InfoText>
          <InfoText $color={RED}>0.51</InfoText>
          <InfoText $color={RED}>+4.82%</InfoText>
          <PeerButton>江龙船艇:15.78%<Triangle w={18} h={13} dir="down" color="#3d8bf0" /></PeerButton>
        </InfoRow>

        <ChartArea>
          <ChartColumn>
            <PriceChart />
            <TimeAxis>
              <span>09:15</span>
              <span>09:30</span>
              <span>11:30</span>
              <span>15:00</span>
            </TimeAxis>
            <VolumeChart />
          </ChartColumn>
          <Book>
            <BigOrder $side="sell"><strong>大单</strong><span>11.15</span><em>*55</em></BigOrder>
            <Levels side="sell" rows={SELLS} />
            <Ratio><i /><i /></Ratio>
            <Levels side="buy" rows={BUYS} />
            <BigOrder $side="buy"><strong>大单</strong><span>10.98</span><em>*984</em></BigOrder>
            <DetailToggle>明细<Triangle w={18} h={12} dir="up" color="#666" /></DetailToggle>
            <Ticks>
              <tbody>
                {TICKS.map(([time, price, volume]) => (
                  <tr key={volume}>
                    <td>{time}</td>
                    <td>{price}</td>
                    <td>{volume}</td>
                  </tr>
                ))}
              </tbody>
            </Ticks>
          </Book>
        </ChartArea>

        <Discussion>
          <Danmu aria-label="弹幕">弹<MinusBadge /></Danmu>
          <TalkLink href="#talk">9828人正在热议...</TalkLink>
          <Votes>
            <Vote>看涨 58%</Vote>
            <Vote $down>看跌 42%</Vote>
          </Votes>
        </Discussion>

        <SectionTabs>
          <SectionTab>看点</SectionTab>
          <SectionTab>资讯</SectionTab>
          <SectionTab>盘口</SectionTab>
          <SectionTab $active>资金</SectionTab>
          <SectionTab>社区</SectionTab>
          <SectionTab>简况(F10)</SectionTab>
        </SectionTabs>
      </main>

      <BottomBar>
        <SectorItem>
          <Triangle w={26} h={15} dir="up" color="#b5b5b5" />
          <span>军工装备</span>
          <strong>-0.96%</strong>
        </SectorItem>
        <BottomItem>
          <BottomIcon>
            <path d="M10 2h38q4 0 4 4v36L41 53H10q-4 0-4-4V6q0-4 4-4z" />
            <path d="M13 16h32M13 23h32M13 30h32M13 37h22" />
          </BottomIcon>
          下单
        </BottomItem>
        <BottomItem>
          <BottomIcon>
            <path d="M18 5h22M6 11h46q4 0 4 4v32q0 4-4 4H6q-4 0-4-4V15q0-4 4-4zM10 53h10M38 53h10" />
            <path d="M19 31h20M29 21v20" />
          </BottomIcon>
          诊股
        </BottomItem>
        <BottomItem>
          <BottomIcon>
            <rect x="6" y="4" width="46" height="47" />
            <path d="M17 27h25" />
          </BottomIcon>
          删自选
        </BottomItem>
        <BottomItem>
          <BottomIcon>
            <circle cx="29" cy="28" r="24" />
            <path d="M18 21h22M18 35h22" />
          </BottomIcon>
          功能
        </BottomItem>
      </BottomBar>
    </>
  );
}
